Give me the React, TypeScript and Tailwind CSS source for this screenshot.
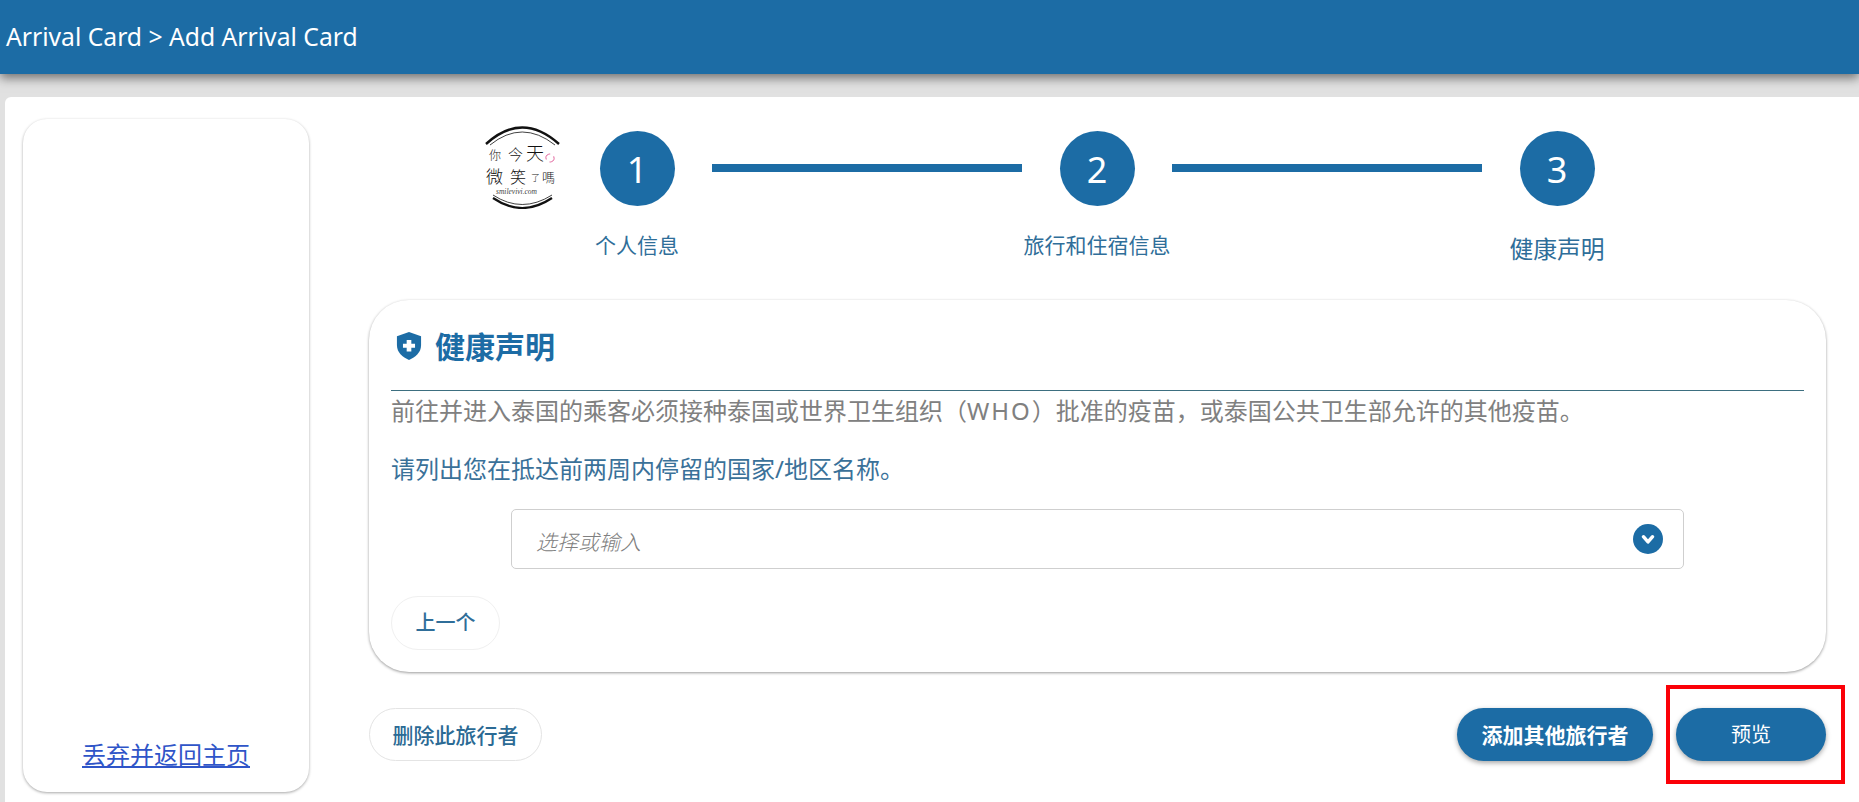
const cjk = "font-['Noto_Sans','Noto_Sans_CJK_SC',sans-serif]";
const logoFont = "Noto Sans CJK SC, sans-serif";

function Logo() {
	return (
		<svg width="78" height="84" viewBox="0 0 78 84" className="shrink-0">
			<path d="M2 19 Q38 -14 75 19" fill="none" stroke="#111" strokeWidth="2.4" />
			<path d="M6 20 Q38 -6 71 20" fill="none" stroke="#111" strokeWidth="0.8" />
			<path d="M9 70 Q38 89 68 70" fill="none" stroke="#111" strokeWidth="0.8" />
			<path d="M9 73 Q38 93 68 73" fill="none" stroke="#111" strokeWidth="2.2" />
			<text x="5" y="35" fontSize="12" fill="#222" fontFamily={logoFont} fontWeight="200">你</text>
			<text x="24" y="35" fontSize="15" fill="#111" fontFamily={logoFont} fontWeight="200">今</text>
			<text x="42" y="35" fontSize="18" fill="#111" fontFamily={logoFont} fontWeight="300">天</text>
			<circle cx="66" cy="33" r="4" fill="none" stroke="#e0609a" strokeWidth="0.9" strokeDasharray="8 4" transform="rotate(-20 66 33)" />
			<text x="2" y="58" fontSize="17" fill="#111" fontFamily={logoFont} fontWeight="300">微</text>
			<text x="26" y="58" fontSize="16" fill="#111" fontFamily={logoFont} fontWeight="300">笑</text>
			<text x="47" y="56" fontSize="9" fill="#222" fontFamily={logoFont} fontWeight="300">了</text>
			<text x="58" y="57" fontSize="13" fill="#222" fontFamily={logoFont} fontWeight="300">嗎</text>
			<text x="12" y="69" fontSize="7.5" fill="#444" fontFamily="Liberation Serif, serif" fontStyle="italic">smilevivi.com</text>
		</svg>
	);
}

function Step({ n, label, big }: { n: number; label: string; big?: boolean }) {
	return (
		<div className="flex w-[150px] shrink-0 flex-col items-center">
			<div className="flex h-[75px] w-[75px] items-center justify-center rounded-full bg-[#1c6ca5] pt-[2px] text-[36px] text-white">{n}</div>
			<span className={big ? "mt-[26px] whitespace-nowrap text-[23.8px] leading-[34px] text-[#2f6e99]" : "mt-[24px] whitespace-nowrap text-[21px] leading-[30px] text-[#2f6e99]"}>{label}</span>
		</div>
	);
}

function ShieldIcon() {
	return (
		<svg width="26" height="30" viewBox="0 0 28 32" className="shrink-0">
			<path d="M14 1 L27 5.5 V15 C27 23 21 28.5 14 31 C7 28.5 1 23 1 15 V5.5 Z" fill="#1c6ca5" />
			<path d="M11.5 9.5 H16.5 V13.5 H20.5 V18 H16.5 V22 H11.5 V18 H7.5 V13.5 H11.5 Z" fill="white" />
		</svg>
	);
}

export default function App() {
	return (
		<div className={`h-[802px] overflow-hidden bg-[#e1e1e1] ${cjk}`}>
			<header className="flex h-[74px] items-center bg-[#1c6ca5] pl-[6px] text-[24.7px] text-white shadow-[0_4px_10px_rgba(0,0,0,0.5)]">
				Arrival Card &gt; Add Arrival Card
			</header>

			<div className="ml-[5px] mt-[23px] flex h-[705px] rounded-tl-[6px] bg-white pl-[18px] pt-[22px] pr-[33px]">
				<aside className="flex h-[673px] w-[286px] shrink-0 flex-col items-center justify-end rounded-[24px] bg-white pb-[20px] shadow-[0_1px_3px_rgba(0,0,0,0.35)]">
					<a href="#" className="text-[24px] leading-[34px] text-[#2f55c8] underline">丢弃并返回主页</a>
				</aside>

				<main className="ml-[60px] flex min-w-0 flex-1 flex-col">
					<div className="ml-[115px] flex items-start">
						<div className="mt-[6px]">
							<Logo />
						</div>
						<div className="mt-[12px] flex items-start">
							<Step n={1} label="个人信息" />
							<div className="mt-[33px] h-[8px] w-[310px] shrink-0 bg-[#1c6ca5]" />
							<Step n={2} label="旅行和住宿信息" />
							<div className="mt-[33px] h-[8px] w-[310px] shrink-0 bg-[#1c6ca5]" />
							<Step n={3} label="健康声明" big />
						</div>
					</div>

					<section className="mt-[34px] h-[372px] rounded-[40px] bg-white px-[22px] shadow-[0_1px_3px_rgba(0,0,0,0.4)]">
						<div className="flex h-[91px] items-center gap-[13px] border-b border-[#3d6f80] pl-[5px] pt-[2px]">
							<ShieldIcon />
							<h2 className="text-[30px] font-bold text-[#1c6ca5]">健康声明</h2>
						</div>
						<p className="mt-[3px] text-[24px] leading-[34px] text-[#808080]">
							前往并进入泰国的乘客必须接种泰国或世界卫生组织（<span className="tracking-[2px]">WHO</span>）批准的疫苗，或泰国公共卫生部允许的其他疫苗。
						</p>
						<p className="mt-[24px] text-[24px] leading-[34px] text-[#3a7199]">请列出您在抵达前两周内停留的国家/地区名称。</p>
						<div className="mx-[120px] mt-[23px] flex h-[60px] items-center justify-between rounded-[5px] border border-[#cfcfcf] pl-[24px] pr-[20px]">
							<span className="pt-[8px] text-[21px] font-light italic text-[#808080]">选择或输入</span>
							<span className="flex h-[30px] w-[30px] items-center justify-center rounded-full bg-[#1c6ca5]">
								<svg width="16" height="16" viewBox="0 0 14 14" fill="none" stroke="white" strokeWidth="3" strokeLinecap="round" strokeLinejoin="round">
									<path d="M3 5 L7 9.5 L11 5" />
								</svg>
							</span>
						</div>
						<button className="mt-[27px] h-[54px] w-[109px] rounded-full border border-[#f0f0f0] text-[20px] font-medium text-[#2f6e99]">上一个</button>
					</section>

					<div className="mt-[36px] flex items-center justify-between">
						<button className="h-[53px] w-[173px] rounded-full border border-[#e4e4e4] pt-[2px] text-[21px] font-medium text-[#2b6a94]">删除此旅行者</button>
						<div className="flex gap-[23px]">
							<button className="h-[53px] w-[196px] rounded-full bg-[#1c6ca5] pt-[2px] text-[21px] font-bold text-white shadow-[0_2px_5px_rgba(0,0,0,0.35)]">添加其他旅行者</button>
							<div className="relative">
								<button className="h-[53px] w-[150px] rounded-full bg-[#1c6ca5] text-[20px] text-white shadow-[0_2px_5px_rgba(0,0,0,0.35)]">预览</button>
								<div className="absolute left-[-10px] top-[-23px] h-[99px] w-[179px] border-[4px] border-[#fb0007]" />
							</div>
						</div>
					</div>
				</main>
			</div>
		</div>
	);
}
